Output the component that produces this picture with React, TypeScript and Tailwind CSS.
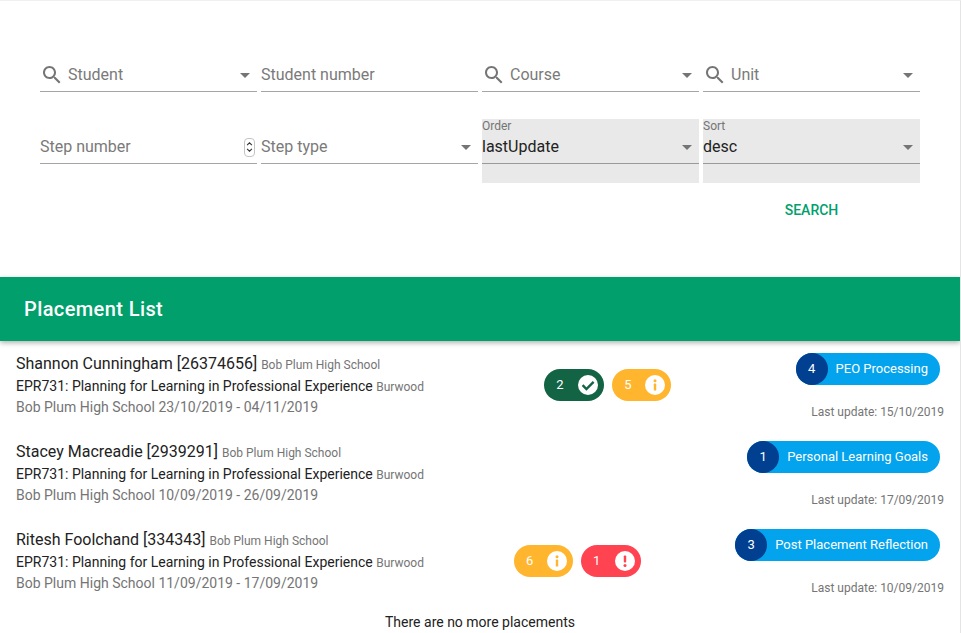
import { ReactNode } from "react";

const roboto = "font-['Roboto',sans-serif]";

function SearchIcon() {
    return (
        <svg viewBox="0 0 24 24" className="w-6 h-6 fill-[#757575] shrink-0 mr-1">
            <path d="M15.5 14h-.79l-.28-.27C15.41 12.59 16 11.11 16 9.5 16 5.91 13.09 3 9.5 3S3 5.91 3 9.5 5.91 16 9.5 16c1.61 0 3.09-.59 4.23-1.57l.27.28v.79l5 4.99L20.49 19l-4.99-5zm-6 0C7.01 14 5 11.99 5 9.5S7.01 5 9.5 5 14 7.01 14 9.5 11.99 14 9.5 14z" />
        </svg>
    );
}

function Caret() {
    return (
        <svg viewBox="0 0 10 5" className="w-[10px] h-[5px] fill-[#757575] shrink-0 ml-auto mr-[7px]">
            <path d="M0 0l5 5 5-5z" />
        </svg>
    );
}

function Spinner() {
    return (
        <div className="ml-auto w-[11px] h-[19px] mr-[2px] rounded-[4px] border border-[#c4c4c4] flex flex-col items-center justify-center gap-[2px]">
            <svg viewBox="0 0 8 5" className="w-[7px] h-[4px] fill-none stroke-[#333] stroke-[1.3]">
                <path d="M1 4l3-3 3 3" />
            </svg>
            <svg viewBox="0 0 8 5" className="w-[7px] h-[4px] fill-none stroke-[#333] stroke-[1.3]">
                <path d="M1 1l3 3 3-3" />
            </svg>
        </div>
    );
}

function Field({ label, search, caret, spinner }: { label: string, search?: boolean, caret?: boolean, spinner?: boolean }) {
    return (
        <div className="h-16">
            <div className="h-[45px] pt-4 border-b border-[#a5a5a5]">
                <div className="flex items-center h-6 text-base text-[#7a7a7a]">
                    {search && <SearchIcon />}
                    <span>{label}</span>
                    {caret && <Caret />}
                    {spinner && <Spinner />}
                </div>
            </div>
        </div>
    );
}

function SelectField({ label, value }: { label: string, value: string }) {
    return (
        <div className="h-16 bg-[#e9e9e9]">
            <div className="h-[45px] pt-4 relative border-b border-[#9a9a9a]">
                <span className="absolute left-0 top-0 text-xs leading-[15px] text-[#757575]">{label}</span>
                <div className="flex items-center h-6 text-base text-[#222]">
                    <span>{value}</span>
                    <Caret />
                </div>
            </div>
        </div>
    );
}

function CheckBadge({ color }: { color: string }) {
    return (
        <svg viewBox="0 0 20 20" className="w-5 h-5">
            <circle cx="10" cy="10" r="10" fill="#fff" />
            <path d="M4.6 10.2l3.8 3.8L15.6 6.8" fill="none" stroke={color} strokeWidth="2.4" />
        </svg>
    );
}

function InfoBadge({ color }: { color: string }) {
    return (
        <svg viewBox="0 0 20 20" className="w-5 h-5">
            <circle cx="10" cy="10" r="10" fill="#fff" />
            <circle cx="10" cy="5.8" r="1.5" fill={color} />
            <rect x="8.8" y="8.6" width="2.4" height="7" rx="0.6" fill={color} />
        </svg>
    );
}

function AlertBadge({ color }: { color: string }) {
    return (
        <svg viewBox="0 0 20 20" className="w-5 h-5">
            <circle cx="10" cy="10" r="10" fill="#fff" />
            <rect x="8.8" y="4.4" width="2.4" height="7.2" rx="0.8" fill={color} />
            <circle cx="10" cy="14.4" r="1.5" fill={color} />
        </svg>
    );
}

function StatusPill({ count, className, children }: { count: number, className: string, children: ReactNode }) {
    return (
        <div className={`flex items-center justify-between h-8 rounded-2xl pl-[12px] pr-[6px] text-[13px] text-white ${className}`}>
            <span>{count}</span>
            {children}
        </div>
    );
}

function StepPill({ step, name }: { step: number, name: string }) {
    return (
        <div className="flex items-center h-8 mr-1 rounded-2xl bg-[#03a3ee] text-[13px] text-white">
            <div className="w-8 h-8 rounded-full bg-[#013f91] flex items-center justify-center">{step}</div>
            <span className="pl-2 pr-3">{name}</span>
        </div>
    );
}

type Placement = {
    student: string,
    school: string,
    dates: string,
    step: number,
    stepName: string,
    updated: string,
    status?: ReactNode,
};

const placements: Placement[] = [
    {
        student: "Shannon Cunningham [26374656]",
        school: "Bob Plum High School",
        dates: "Bob Plum High School 23/10/2019 - 04/11/2019",
        step: 4,
        stepName: "PEO Processing",
        updated: "Last update: 15/10/2019",
        status: (
            <>
                <StatusPill count={2} className="w-[60px] bg-[#136445]"><CheckBadge color="#136445" /></StatusPill>
                <StatusPill count={5} className="w-[59px] bg-[#ffb62e]"><InfoBadge color="#ffb62e" /></StatusPill>
            </>
        ),
    },
    {
        student: "Stacey Macreadie [2939291]",
        school: "Bob Plum High School",
        dates: "Bob Plum High School 10/09/2019 - 26/09/2019",
        step: 1,
        stepName: "Personal Learning Goals",
        updated: "Last update: 17/09/2019",
    },
    {
        student: "Ritesh Foolchand [334343]",
        school: "Bob Plum High School",
        dates: "Bob Plum High School 11/09/2019 - 17/09/2019",
        step: 3,
        stepName: "Post Placement Reflection",
        updated: "Last update: 10/09/2019",
        status: (
            <>
                <StatusPill count={6} className="w-[59px] bg-[#ffb62e]"><InfoBadge color="#ffb62e" /></StatusPill>
                <StatusPill count={1} className="w-[60px] bg-[#ff4351]"><AlertBadge color="#ff4351" /></StatusPill>
            </>
        ),
    },
];

export default function App() {
    return (
        <div className={`${roboto} w-[961px] h-[633px] overflow-hidden bg-white border-r border-[#e4e4e4] border-t border-t-[#f0f0f0]`}>
            <section className="h-[276px] px-10 pt-[46px]">
                <div className="grid grid-cols-4 w-[880px] gap-x-1 gap-y-2">
                    <Field label="Student" search caret />
                    <Field label="Student number" />
                    <Field label="Course" search caret />
                    <Field label="Unit" search caret />
                    <Field label="Step number" spinner />
                    <Field label="Step type" caret />
                    <SelectField label="Order" value="lastUpdate" />
                    <SelectField label="Sort" value="desc" />
                </div>
                <div className="grid grid-cols-4 w-[880px] gap-x-1 mt-[9px]">
                    <button className="col-start-4 h-9 text-sm font-medium text-[#00a06b]">SEARCH</button>
                </div>
            </section>

            <header className="relative h-16 flex items-center px-6 bg-[#009f6b] shadow-[0_2px_5px_rgba(0,0,0,0.3)]">
                <h2 className="text-xl font-medium tracking-[0.4px] text-white">Placement List</h2>
            </header>

            <main>
                {placements.map((p) => (
                    <div key={p.student} className="flex justify-between items-center h-[88px] pl-4 pr-4">
                        <div className="text-sm leading-[21px] text-[#222]">
                            <div className="text-base leading-6">
                                {p.student} <span className="text-xs text-[#757575]">{p.school}</span>
                            </div>
                            <div>
                                EPR731: Planning for Learning in Professional Experience <span className="text-xs text-[#757575]">Burwood</span>
                            </div>
                            <div className="text-[#757575]">{p.dates}</div>
                        </div>
                        <div className="flex gap-2 mr-1">{p.status}</div>
                        <div className="flex flex-col items-end gap-5 pt-[2px]">
                            <StepPill step={p.step} name={p.stepName} />
                            <span className="text-xs leading-[14px] text-[#757575]">{p.updated}</span>
                        </div>
                    </div>
                ))}
                <p className="text-sm text-center text-[#222] mt-[7px]">There are no more placements</p>
            </main>
        </div>
    );
}
